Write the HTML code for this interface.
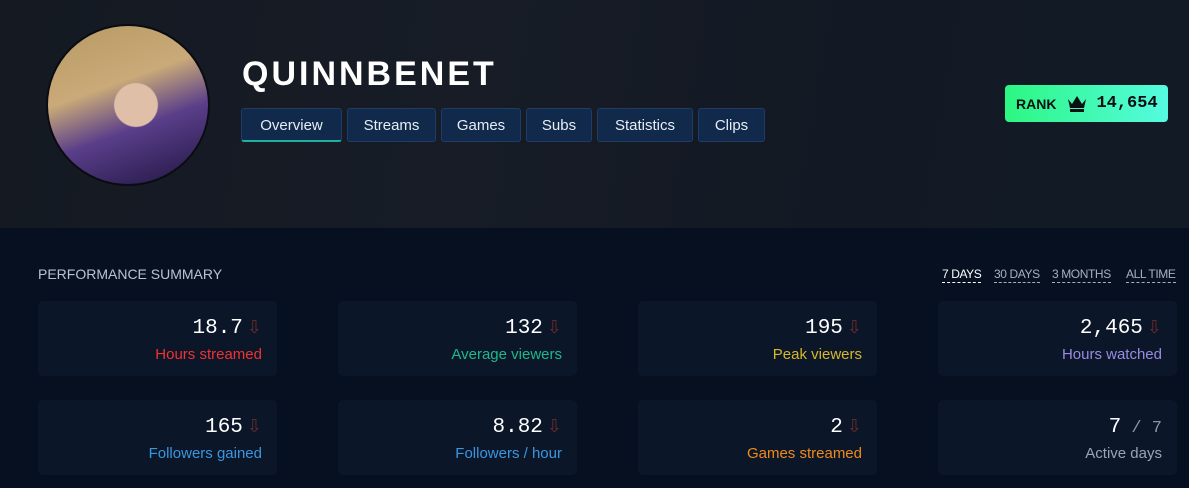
<!DOCTYPE html>
<html><head><meta charset="utf-8"><style>
*{margin:0;padding:0;box-sizing:border-box}
body{width:1189px;height:488px;overflow:hidden;background:#061020;font-family:"Liberation Sans",sans-serif;position:relative}
.hdr{position:absolute;left:0;top:0;width:1189px;height:228px;background:linear-gradient(100deg,#141922 0%,#171c26 40%,#131924 70%,#121a26 100%)}
.av{position:absolute;left:46px;top:24px;width:164px;height:162px;border-radius:50%;overflow:hidden;background:radial-gradient(circle at 55% 50%,#e0bfa8 0 18%,transparent 19%),linear-gradient(160deg,#b89a66 0%,#c9aa78 38%,#5a3e8a 62%,#1e1540 100%);border:2px solid #0a0c12}
.name{position:absolute;left:242px;top:55px;color:#fff;font-size:34px;font-weight:bold;letter-spacing:3px}
.tab{position:absolute;top:108px;height:34px;background:#11294a;border:1px solid #1d3d66;border-radius:3px;color:#e6edf5;font-size:15px;line-height:34px;text-align:center}
.tab.on{border-bottom:2px solid #20b0a0}
.rank{position:absolute;left:1005px;top:85px;width:163px;height:37px;border-radius:4px;background:linear-gradient(90deg,#2cf782,#55fbe0);display:flex;align-items:center;padding-left:11px;font-weight:bold;font-size:14px;color:#0a0f14}
.rank .n{font-family:"Liberation Mono",monospace;font-size:17px;margin-left:8px}
.ps{position:absolute;left:38px;top:266px;color:#b9c3d0;font-size:14px}
.rng{position:absolute;top:267px;font-size:12px;letter-spacing:-0.4px;color:#a6b0be;border-bottom:1px dashed #a6b0be;padding-bottom:1px}
.card{position:absolute;width:239px;height:75px;background:#0b1628;border-radius:5px;text-align:right;padding-right:15px}
.v{margin-top:16px;font-family:"Liberation Mono",monospace;font-size:21px;color:#fff;height:26px}
.v .a{color:#6b2c2c;font-family:"DejaVu Sans",sans-serif;font-size:18px;margin-left:4px}
.l{font-size:15px;margin-top:3px}
</style></head><body>
<div class="hdr"></div>
<div class="av"></div>
<div class="name">QUINNBENET</div>
<div class="tab on" style="left:241px;width:101px">Overview</div>
<div class="tab" style="left:347px;width:89px">Streams</div>
<div class="tab" style="left:441px;width:80px">Games</div>
<div class="tab" style="left:526px;width:66px">Subs</div>
<div class="tab" style="left:597px;width:96px">Statistics</div>
<div class="tab" style="left:698px;width:67px">Clips</div>
<div class="rank">RANK<svg width="22" height="18" viewBox="0 0 22 18" style="margin-left:10px"><path d="M2 4l4 5 5-8 5 8 4-5-2 9H4z" fill="#0a0f14"/><rect x="4" y="14" width="14" height="3" fill="#0a0f14"/></svg><span class="n">14,654</span></div>
<div class="ps">PERFORMANCE SUMMARY</div>
<div class="rng" style="left:942px;color:#fff;border-color:#fff">7 DAYS</div>
<div class="rng" style="left:994px">30 DAYS</div>
<div class="rng" style="left:1052px">3 MONTHS</div>
<div class="rng" style="left:1126px">ALL TIME</div>
<div class="card" style="left:38px;top:301px"><div class="v">18.7<span class="a">⇩</span></div><div class="l" style="color:#f03232">Hours streamed</div></div>
<div class="card" style="left:338px;top:301px"><div class="v">132<span class="a">⇩</span></div><div class="l" style="color:#1fb88a">Average viewers</div></div>
<div class="card" style="left:638px;top:301px"><div class="v">195<span class="a">⇩</span></div><div class="l" style="color:#d6b82a">Peak viewers</div></div>
<div class="card" style="left:938px;top:301px"><div class="v">2,465<span class="a">⇩</span></div><div class="l" style="color:#9a8be0">Hours watched</div></div>
<div class="card" style="left:38px;top:400px"><div class="v">165<span class="a">⇩</span></div><div class="l" style="color:#3a96e0">Followers gained</div></div>
<div class="card" style="left:338px;top:400px"><div class="v">8.82<span class="a">⇩</span></div><div class="l" style="color:#3a96e0">Followers / hour</div></div>
<div class="card" style="left:638px;top:400px"><div class="v">2<span class="a">⇩</span></div><div class="l" style="color:#f08a1a">Games streamed</div></div>
<div class="card" style="left:938px;top:400px"><div class="v">7<span style="color:#8a94a4;font-size:17px"> / 7</span></div><div class="l" style="color:#9aa4b2">Active days</div></div>
</body></html>
